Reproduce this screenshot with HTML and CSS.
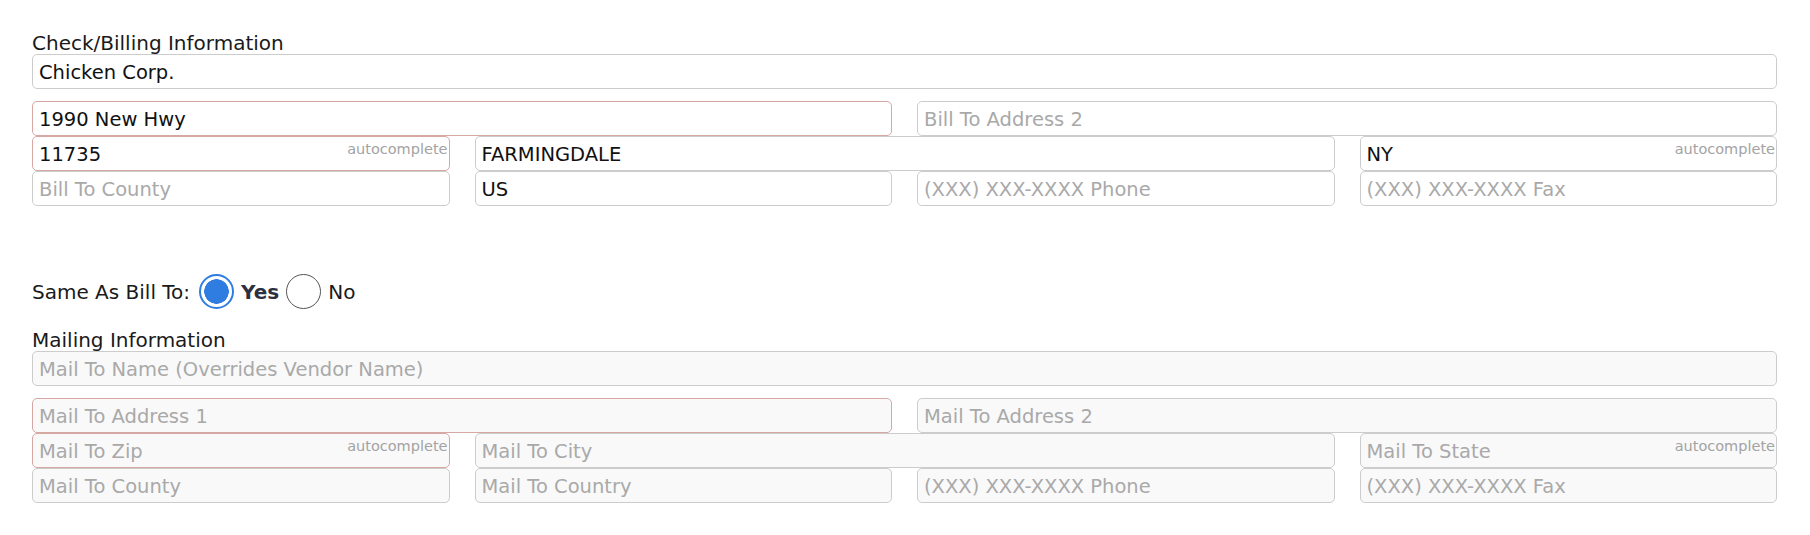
FILE: index.html
```html
<!DOCTYPE html>
<html lang="en">
<head>
  <meta charset="UTF-8" />
  <title>Vendor Address</title>
  <link rel="stylesheet" href="styles.css">
</head>
<body>
  <div class="page">

    <!-- Billing -->
    <div class="group-title">Check/Billing Information</div>
    <input type="text" class="field" name="bill_name" value="Chicken Corp.">
    <div class="grid">
      <input type="text" class="field req span2" name="bill_addr1" value="1990 New Hwy">
      <input type="text" class="field span2" name="bill_addr2" placeholder="Bill To Address 2">

      <div class="auto-wrap">
        <input type="text" class="field req" name="bill_zip" value="11735">
        <span class="auto">autocomplete</span>
      </div>
      <input type="text" class="field span2" name="bill_city" value="FARMINGDALE">
      <div class="auto-wrap">
        <input type="text" class="field" name="bill_state" value="NY">
        <span class="auto">autocomplete</span>
      </div>

      <input type="text" class="field" name="bill_county" placeholder="Bill To County">
      <input type="text" class="field" name="bill_country" value="US">
      <input type="tel" class="field" name="bill_phone" placeholder="(XXX) XXX-XXXX Phone">
      <input type="tel" class="field" name="bill_fax" placeholder="(XXX) XXX-XXXX Fax">
    </div>

    <div class="same-row">
      <span class="same-label">Same As Bill To:</span>
      <label class="choice">
        <input type="radio" name="same_as_bill" value="1" checked>
        <span class="choice-text bold">Yes</span>
      </label>
      <label class="choice">
        <input type="radio" name="same_as_bill" value="0">
        <span class="choice-text">No</span>
      </label>
    </div>

    <!-- Mailing -->
    <div class="group-title">Mailing Information</div>
    <input type="text" class="field off" name="mail_name" placeholder="Mail To Name (Overrides Vendor Name)" disabled>
    <div class="grid">
      <input type="text" class="field off req span2" name="mail_addr1" placeholder="Mail To Address 1" disabled>
      <input type="text" class="field off span2" name="mail_addr2" placeholder="Mail To Address 2" disabled>

      <div class="auto-wrap">
        <input type="text" class="field off req" name="mail_zip" placeholder="Mail To Zip" disabled>
        <span class="auto">autocomplete</span>
      </div>
      <input type="text" class="field off span2" name="mail_city" placeholder="Mail To City" disabled>
      <div class="auto-wrap">
        <input type="text" class="field off" name="mail_state" placeholder="Mail To State" disabled>
        <span class="auto">autocomplete</span>
      </div>

      <input type="text" class="field off" name="mail_county" placeholder="Mail To County" disabled>
      <input type="text" class="field off" name="mail_country" placeholder="Mail To Country" disabled>
      <input type="tel" class="field off" name="mail_phone" placeholder="(XXX) XXX-XXXX Phone" disabled>
      <input type="tel" class="field off" name="mail_fax" placeholder="(XXX) XXX-XXXX Fax" disabled>
    </div>

  </div>
</body>
</html>
```

FILE: styles.css
```css
body {
  margin: 0;
  background: white;
  font-family: "DejaVu Sans", Verdana, sans-serif;
  font-size: 20px;
  color: #1a1a1a;
}
.page {
  padding: 32px 33px 0 32px;
}
.group-title {
  line-height: 22px;
}
.field {
  display: block;
  box-sizing: border-box;
  width: 100%;
  height: 35px;
  margin: 0;
  padding: 1px 6px 0;
  border: 1px solid #cccccc;
  border-radius: 5px;
  background: white;
  font-family: inherit;
  font-size: 19.5px;
  color: #111;
  outline: none;
}
.field::placeholder {
  color: #a9a9a9;
  opacity: 1;
}
.field.req {
  border-color: #d6a8a3;
}
.field.off {
  background: #f9f9f9;
}
.grid {
  display: grid;
  grid-template-columns: repeat(4, 1fr);
  column-gap: 25px;
  margin-top: 12px;
}
.span2 {
  grid-column: span 2;
}
.auto-wrap {
  position: relative;
}
.auto {
  position: absolute;
  top: 5px;
  right: 2px;
  font-size: 14.5px;
  line-height: 16px;
  color: #a3a3a3;
}
.same-row {
  display: flex;
  align-items: center;
  height: 35px;
  margin-top: 68px;
  margin-bottom: 20px;
}
.same-label {
  margin-right: 2px;
}
.choice {
  display: flex;
  align-items: center;
}
.choice input {
  appearance: none;
  box-sizing: border-box;
  width: 35px;
  height: 35px;
  margin: 0 7px;
  border: 1.5px solid #555;
  border-radius: 50%;
  background: white;
}
.choice input:checked {
  border: 2px solid #2f7de1;
  background: radial-gradient(circle, #2f7de1 0 12px, white 12.5px);
}
.choice-text.bold {
  font-weight: bold;
  color: #2b3141;
}
```
